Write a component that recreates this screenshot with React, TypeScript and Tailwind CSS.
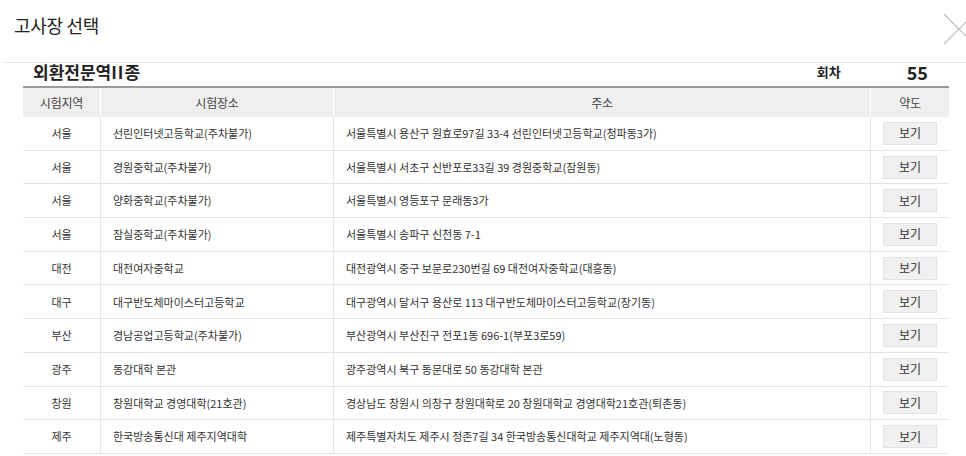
import React from "react";

const rows: [string, string, string][] = [
  ["서울", "선린인터넷고등학교(주차불가)", "서울특별시 용산구 원효로97길 33-4 선린인터넷고등학교(청파동3가)"],
  ["서울", "경원중학교(주차불가)", "서울특별시 서초구 신반포로33길 39 경원중학교(잠원동)"],
  ["서울", "양화중학교(주차불가)", "서울특별시 영등포구 문래동3가"],
  ["서울", "잠실중학교(주차불가)", "서울특별시 송파구 신천동 7-1"],
  ["대전", "대전여자중학교", "대전광역시 중구 보문로230번길 69 대전여자중학교(대흥동)"],
  ["대구", "대구반도체마이스터고등학교", "대구광역시 달서구 용산로 113 대구반도체마이스터고등학교(장기동)"],
  ["부산", "경남공업고등학교(주차불가)", "부산광역시 부산진구 전포1동 696-1(부포3로59)"],
  ["광주", "동강대학 본관", "광주광역시 북구 동문대로 50 동강대학 본관"],
  ["창원", "창원대학교 경영대학(21호관)", "경상남도 창원시 의창구 창원대학로 20 창원대학교 경영대학21호관(퇴촌동)"],
  ["제주", "한국방송통신대 제주지역대학", "제주특별자치도 제주시 정존7길 34 한국방송통신대학교 제주지역대(노형동)"],
];

export default function App() {
  return (
    <div
      className="w-[966px] h-[456px] overflow-hidden bg-white text-[#333]"
      style={{ fontFamily: '"Noto Sans CJK KR", "Noto Sans", sans-serif' }}
    >
      <div className="h-[62px] flex justify-between items-start">
        <div className="pl-[14px] pt-[14px] text-[18px] leading-[22px] tracking-[-0.3px] text-[#222]">
          고사장 선택
        </div>
        <svg width="32" height="32" viewBox="0 0 32 32" className="mt-[13px] -mr-[9px] shrink-0">
          <path d="M1 1 L31 31 M31 1 L1 31" stroke="#bdbdbd" strokeWidth="1.2" fill="none" />
        </svg>
      </div>
      <div className="ml-[4px] border-t border-[#e6e6e6]" />
      <div className="pl-[23px] pr-[17px]">
        <div className="h-[23px] flex items-start font-bold text-[#222]">
          <div className="flex-1 pl-[10px] text-[17px] leading-[18px] tracking-[0px]">
            외환전문역<span className="tracking-[1px]">II</span>종
          </div>
          <div className="text-[13px] leading-[18px] mr-[66px]">회차</div>
          <div className="text-[18px] leading-[18px] mr-[21px]">55</div>
        </div>
        <div className="border-t-2 border-[#9a9a9a]">
          <div className="flex h-[29px] bg-[#efefef] text-[12px] tracking-[-0.2px] text-[#444]">
            <div className="w-[78px] flex items-center justify-center border-r border-white">시험지역</div>
            <div className="w-[233px] flex items-center justify-center border-r border-white">시험장소</div>
            <div className="w-[537px] flex items-center justify-center border-r border-white">주소</div>
            <div className="flex-1 flex items-center justify-center">약도</div>
          </div>
          {rows.map((r, i) => (
            <div key={i} className="flex h-[33.7px] border-b border-[#e3e3e3] text-[11px] tracking-[0px] text-[#333]">
              <div className="w-[78px] flex items-center justify-center border-r border-[#e6e6e6]">{r[0]}</div>
              <div className="w-[233px] flex items-center pl-[12px] border-r border-[#e6e6e6]">{r[1]}</div>
              <div className="w-[537px] flex items-center pl-[12px] border-r border-[#e6e6e6]">{r[2]}</div>
              <div className="flex-1 flex items-center justify-center">
                <button className="w-[54px] h-[23px] bg-[#f0f0f0] border border-[#e2e2e2] text-[12px] text-[#333] leading-none">
                  보기
                </button>
              </div>
            </div>
          ))}
        </div>
      </div>
    </div>
  );
}
